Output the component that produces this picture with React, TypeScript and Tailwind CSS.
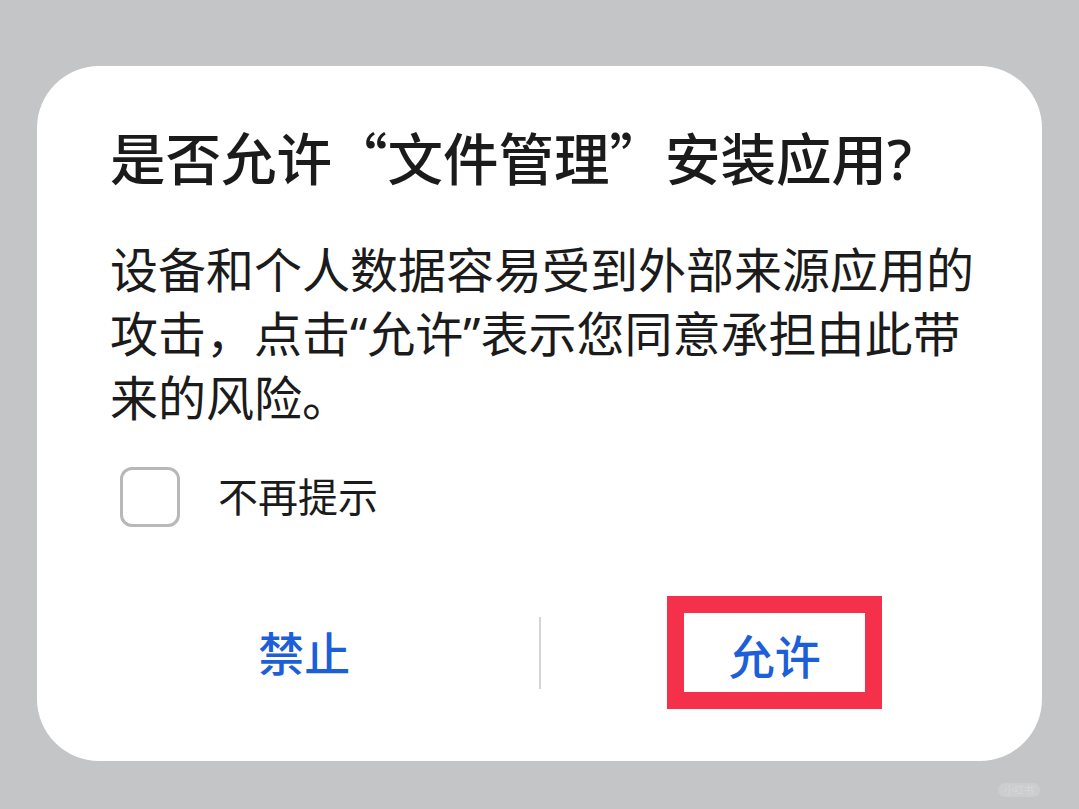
const font = "font-['Noto_Sans','Noto_Sans_CJK_SC',sans-serif]";
const cjk = "font-['Noto_Sans_CJK_SC',sans-serif]";

const Checkbox = () => (
  <div className="w-[60px] h-[60px] rounded-[12px] border-[3px] border-[#b8b8b8] bg-white" />
);

const App = () => {
  return (
    <div className={`w-[1079px] h-[809px] bg-[#c3c5c6] pt-[66px] px-[37px] overflow-hidden ${font}`}>
      <div className="relative h-[695px] rounded-[62px] bg-white flex flex-col">
        <h1 className="mt-[57px] pl-[73px] text-[55.5px] leading-[67px] font-medium text-[#1b1b1b] whitespace-nowrap">
          是否允许<span className={cjk}>“</span>文件管理<span className={cjk}>”</span>安装应用?
        </h1>

        <div className="mt-[46px] pl-[73px] text-[48px] leading-[64px] text-[#1b1b1b] whitespace-nowrap">
          <p>设备和个人数据容易受到外部来源应用的</p>
          <p>攻击，点击“允许”表示您同意承担由此带</p>
          <p>来的风险。</p>
        </div>

        <div className="mt-[37px] pl-[83px] flex items-center gap-[38px]">
          <Checkbox />
          <span className="text-[40px] leading-[60px] text-[#1b1b1b]">不再提示</span>
        </div>

        <div className="mt-[69px] px-[33px] flex items-center">
          <div className="flex-1 flex justify-center">
            <button className="text-[46px] leading-[60px] font-medium text-[#1d5fd8]">禁止</button>
          </div>
          <div className="w-[2px] h-[72px] bg-[#d4d4d4]" />
          <div className="flex-1 flex justify-center">
            <button className="w-[215px] h-[113px] border-[17px] border-[#f4304a] flex items-center justify-center text-[46px] leading-[60px] font-medium text-[#1d5fd8]">
              <span className="mt-[6px]">允许</span>
            </button>
          </div>
        </div>
      </div>
      <div className="flex justify-end mt-[22px] pr-[2px]">
        <span className="px-[6px] rounded-full bg-[#cbcdce] text-[10px] leading-[14px] text-[#d6d8d9]">小红书</span>
      </div>
    </div>
  );
};

export default App;
